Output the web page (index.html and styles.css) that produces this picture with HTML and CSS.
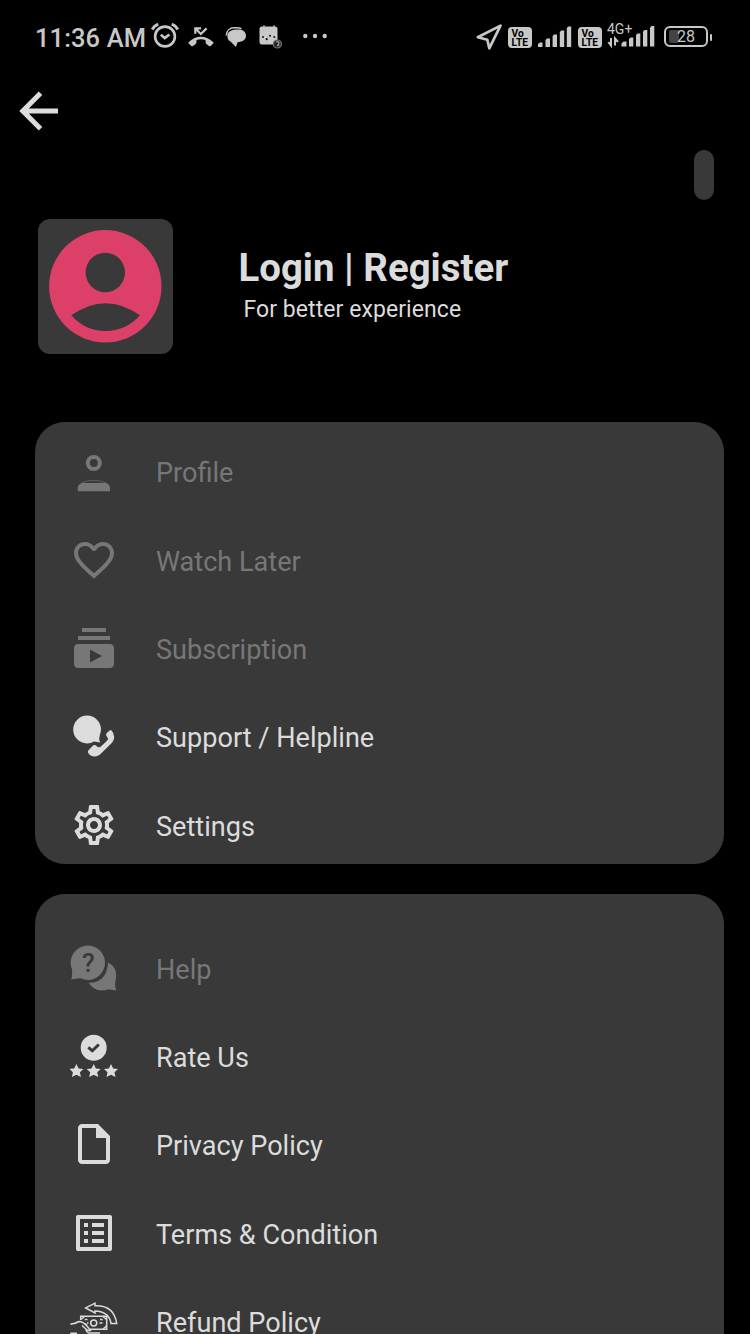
FILE: index.html
```html
<!DOCTYPE html>
<html lang="en">
<head>
<meta charset="utf-8">
<title>Account</title>
<link rel="stylesheet" href="styles.css">
</head>
<body>
<div class="screen">
  <header class="status">
    <div class="status-left">
      <span class="clock">11:36 AM</span>
      <svg class="ic-alarm" width="28" height="28" viewBox="0 0 28 28" fill="none" stroke="currentColor"><circle cx="14" cy="14.5" r="9.9" stroke-width="2.600"/><path d="M9.8 12.700l4 3.400 4.600-3.600" stroke-width="2.600"/><path d="M1.200 7.400Q3.200 3.800 7.200 2.200M26.800 7.400Q24.800 3.800 20.800 2.200" stroke-width="3"/></svg>
      <svg class="ic-missed" width="26" height="20" viewBox="0 0 26 20"><path d="M.6 15.200Q12.500 4.400 25.400 15.200Q25.800 16 25 16.800L22.600 19Q21.800 19.600 21 19L17.800 16.500L17.400 13Q13 11.600 8.600 13L8.200 16.500L5 19Q4.200 19.600 3.400 19L1 16.800Q.2 16 .6 15.200Z" fill="currentColor"/><path d="M7.300 6.800V1.300H13M7.500 1.600L12.800 7L18.600 1.400" fill="none" stroke="currentColor" stroke-width="2.200"/></svg>
      <svg class="ic-chat" width="22" height="20" viewBox="0 0 22 20"><path d="M12 2.400H14C18 2.400 21 5 21 8.700C21 12 18 15 12.500 15.200L11 20L5.500 14.600C3 13 2.400 11 2.400 8.700C2.400 5 6 2.400 12 2.400Z" fill="currentColor"/><path d="M1.200 8.500C1.500 3.500 5 .8 9 .8H11C14 .8 15.500 1 16.500 1.600" fill="none" stroke="currentColor" stroke-width="1.400"/></svg>
      <svg class="ic-cal" width="24" height="24" viewBox="0 0 24 24"><path d="M5 0V3M15 0V3" stroke="currentColor"/><rect x=".5" y="1.500" width="18" height="18" rx="2.500" fill="currentColor"/><g fill="#111"><circle cx="4" cy="12" r="1"/><circle cx="7.700" cy="14.200" r="1.100"/><circle cx="11" cy="10.800" r="1"/><circle cx="15.300" cy="12" r="1"/></g><circle cx="18.400" cy="19" r="4" fill="#222" stroke="#777" stroke-width="1.200"/><path d="M17 17Q20 16 20 18T18 20.500L20.500 21" fill="none" stroke="#aaa" stroke-width="1.200"/></svg>
      <svg class="ic-dots" width="24" height="6" viewBox="0 0 24 6" fill="currentColor"><circle cx="2.300" cy="3" r="2.200"/><circle cx="12" cy="3" r="2.200"/><circle cx="21.700" cy="3" r="2.200"/></svg>
    </div>
    <div class="status-right">
      <svg class="ic-nav" width="27" height="28" viewBox="0 0 27 28"><path d="M1.800 14.200L24.500 2.600L13.300 25.300L11.300 16.700Z" fill="none" stroke="currentColor" stroke-width="2.700" stroke-linejoin="round"/></svg>
      <div class="volte"><span>Vo</span><span>LTE</span></div>
      <svg class="ic-bars" width="34" height="22" viewBox="0 0 34 22" fill="currentColor"><path d="M0 21V18L2 16.500H4.500V21Z"/><path d="M7.500 21V14L9 12.500H12V21Z"/><path d="M14.600 21V10L16 8.500H19V21Z"/><path d="M21.800 21V6L23.300 4.500H26.200V21Z"/><path d="M28.800 21V2L30.300 .5H33.200V21Z"/></svg>
      <div class="volte volte-second"><span>Vo</span><span>LTE</span></div>
      <svg class="ic-4g" width="49" height="32" viewBox="0 -3 49 32" fill="currentColor"><text x="0" y="11" class="net">4G+</text><path d="M4 15V22M1.300 19L4 22.500V15.500M8 22.500V15.500L11 19" fill="none" stroke="currentColor" stroke-width="2"/><path d="M14.500 23.500V20.500L16.500 18.500H19.500V23.500Z"/><path d="M22 23.500V16L23.500 14.500H26.300V23.500Z"/><path d="M29 23.500V12L30.500 10.500H33.300V23.500Z"/><path d="M36 23.500V8.500L37.500 7H40.300V23.500Z"/><path d="M43 23.500V4.500L44.500 3H47.300V23.500Z"/></svg>
      <div class="battery"><span class="charge"></span><span class="level">28</span></div>
      <span class="nub"></span>
    </div>
  </header>

  <nav class="topbar">
    <svg width="40" height="40" viewBox="0 0 40 40" fill="none" stroke="currentColor" stroke-width="5"><path d="M39 20H4.500M21.500 2.300L3.800 20L21.500 37.700"/></svg>
  </nav>
  <div class="toggle-row"><span class="pill"></span></div>

  <section class="account">
    <div class="avatar">
      <svg width="134" height="134" viewBox="0 0 134 134"><circle cx="67.300" cy="67.300" r="56.200" fill="#dc4069"/><circle cx="67.300" cy="53.500" r="19.700" fill="#393939"/><path d="M33.300 96.300Q67.500 72 102 96.300Q88 112 67.500 112T33.300 96.300Z" fill="#393939"/></svg>
    </div>
    <div class="account-text">
      <h1>Login | Register</h1>
      <p>For better experience</p>
    </div>
  </section>

  <ul class="card card-main">
    <li class="row dim">
      <svg class="icon" viewBox="0 0 48 48"><circle cx="23.800" cy="16" r="6" fill="none" stroke="currentColor" stroke-width="4"/><path d="M7.800 44.300V40.500C8 38 10 36.300 12.500 36H35.500C37.500 36.300 39.800 38 40 40.500V44.300Z"/><path d="M11.500 36Q23.800 30.500 36.300 36" fill="none" stroke="currentColor" stroke-width=".6"/></svg>
      <span>Profile</span>
    </li>
    <li class="row dim">
      <svg class="icon" viewBox="0 0 24 24"><path d="M16.500 3c-1.740 0-3.410.81-4.500 2.090C10.910 3.810 9.240 3 7.500 3 4.420 3 2 5.420 2 8.500c0 3.780 3.400 6.860 8.550 11.540L12 21.350l1.450-1.320C18.600 15.360 22 12.280 22 8.500 22 5.420 19.580 3 16.500 3zm-4.400 15.550l-.1.100-.1-.1C7.140 14.240 4 11.390 4 8.500 4 6.500 5.500 5 7.500 5c1.540 0 3.040.99 3.570 2.360h1.870C13.460 5.990 14.960 5 16.500 5c2 0 3.500 1.500 3.500 3.500 0 2.890-3.140 5.740-7.900 10.050z"/></svg>
      <span>Watch Later</span>
    </li>
    <li class="row dim">
      <svg class="icon" viewBox="0 0 24 24"><path d="M20 8H4V6h16v2zm-2-6H6v2h12V2zm4 10v8c0 1.100-.9 2-2 2H4c-1.100 0-2-.9-2-2v-8c0-1.100.9-2 2-2h16c1.100 0 2 .9 2 2zm-6 4l-6-3.270v6.530L16 16z"/></svg>
      <span>Subscription</span>
    </li>
    <li class="row">
      <svg class="icon" viewBox="0 0 48 48"><path d="M29.800 23Q31 20 31 17.500A13.900 13.900 0 1 0 17 31.400Q21 31.400 24 29.500L30 30.500Q28.500 27 29.800 23Z"/><path d="M40 18.200L36.500 21.200Q35.800 22.500 36.300 23.800L38.200 26.800Q37.500 28.500 36.300 29.500L31.200 34.300Q30 35.500 28 35.300L25.700 33.300Q24.300 32.600 23.300 33.200L18.500 38.200Q17.500 39.500 18 40.500Q20 44.800 25.500 44.500Q28 44.200 30 42.500L42 30.700Q44.200 28 44.200 25Q43.800 20.500 41.500 18.500Q40.700 17.800 40 18.200Z"/></svg>
      <span>Support / Helpline</span>
    </li>
    <li class="row">
      <svg class="icon" viewBox="0 0 24 24"><path fill-rule="evenodd" d="M19.430 12.980c.04-.32.07-.64.07-.98 0-.34-.03-.66-.07-.98l2.110-1.650c.19-.15.24-.42.12-.64l-2-3.460c-.09-.16-.26-.25-.44-.25-.06 0-.12.010-.17.030l-2.490 1c-.52-.4-1.080-.73-1.690-.98l-.38-2.650C14.460 2.180 14.250 2 14 2h-4c-.25 0-.46.18-.49.42l-.38 2.650c-.61.25-1.170.59-1.690.98l-2.490-1c-.06-.02-.12-.03-.18-.03-.17 0-.34.09-.43.25l-2 3.460c-.13.22-.07.49.12.64l2.110 1.650c-.04.32-.07.65-.07.98 0 .33.030.66.070.98l-2.110 1.650c-.19.15-.24.42-.12.64l2 3.460c.09.16.26.25.44.25.06 0 .12-.01.17-.03l2.490-1c.52.4 1.080.73 1.690.98l.38 2.650c.03.24.24.42.49.42h4c.25 0 .46-.18.49-.42l.38-2.650c.61-.25 1.170-.59 1.690-.98l2.490 1c.06.02.12.03.18.03.17 0 .34-.09.43-.25l2-3.460c.12-.22.07-.49-.12-.64l-2.110-1.650zm-1.980-1.710c.04.31.05.52.05.73 0 .21-.02.43-.05.73l-.14 1.130.89.7 1.080.84-.7 1.210-1.270-.51-1.040-.42-.9.68c-.43.32-.84.56-1.250.73l-1.060.43-.16 1.130-.2 1.350h-1.400l-.19-1.350-.16-1.130-1.060-.43c-.43-.18-.83-.41-1.230-.71l-.91-.7-1.060.43-1.270.51-.7-1.210 1.080-.84.89-.7-.14-1.130c-.03-.31-.05-.54-.05-.74s.02-.43.05-.73l.14-1.130-.89-.7-1.080-.84.7-1.210 1.270.51 1.040.42.9-.68c.43-.32.84-.56 1.250-.73l1.060-.43.16-1.130.2-1.350h1.390l.19 1.350.16 1.130 1.060.43c.43.18.83.41 1.230.71l.91.7 1.060-.43 1.270-.51.7 1.210-1.070.85-.89.7.14 1.130zM12 8c-2.210 0-4 1.790-4 4s1.790 4 4 4 4-1.790 4-4-1.790-4-4-4zm0 6c-1.100 0-2-.9-2-2s.9-2 2-2 2 .9 2 2-.9 2-2 2z"/></svg>
      <span>Settings</span>
    </li>
  </ul>

  <ul class="card card-more">
    <li class="row dim">
      <svg class="icon" viewBox="0 0 48 48"><path d="M1.300 35.500Q2.500 32 2 25.500A17.200 17.200 0 1 1 10.500 34.300Q6 34.500 1.300 35.500Z"/><path d="M38 18.500Q46 22.500 46.200 31Q46.200 35.500 45 39.500Q45 43.500 46.200 46.500Q42.500 46 38.800 45.200Q25 49.500 18.700 38.800Q37 38.500 38 18.500Z"/><text x="18.300" y="28" class="question">?</text></svg>
      <span>Help</span>
    </li>
    <li class="row">
      <svg class="icon" viewBox="0 0 48 48"><circle cx="23.700" cy="15.800" r="13"/><path d="M18.300 15.300L22.300 18.800L28.800 12.500" fill="none" stroke="#393939" stroke-width="3"/><defs><path id="star" d="M0-7L2.150-2.500L7-2.100L3.500 1.300L4.500 6L0 3.800L-4.500 6L-3.500 1.300L-7-2.100L-2.150-2.500Z"/></defs><use href="#star" x="6.400" y="39"/><use href="#star" x="23.700" y="39"/><use href="#star" x="41" y="39"/></svg>
      <span>Rate Us</span>
    </li>
    <li class="row">
      <svg class="icon" viewBox="0 0 24 24"><path d="M14 2H6c-1.100 0-2 .9-2 2v16c0 1.100.9 2 2 2h12c1.100 0 2-.9 2-2V8l-6-6zM6 20V4h7v5h5v11H6z"/></svg>
      <span>Privacy Policy</span>
    </li>
    <li class="row">
      <svg class="icon" viewBox="0 0 24 24"><path d="M19 5v14H5V5h14m1.100-2H3.900c-.5 0-.9.4-.9.9v16.200c0 .4.400.9.900.9h16.200c.4 0 .9-.5.9-.9V3.900c0-.5-.5-.9-.9-.9zM11 7h6v2h-6V7zm0 4h6v2h-6v-2zm0 4h6v2h-6zM7 7h2v2H7zm0 4h2v2H7zm0 4h2v2H7z"/></svg>
      <span>Terms &amp; Condition</span>
    </li>
    <li class="row">
      <svg class="icon line" viewBox="0 0 48 48"><path d="M15.700 10.900L25 6.200V8.800Q44 8 46.700 26.600H41Q39.500 14.500 25 13.900V15.900Z"/><path d="M10.700 23V19.200H36.700V32.200H20"/><circle cx="23.700" cy="26" r="3"/><path d="M14.500 19.500L11 22.500M33 19.500L36.500 22.500M33 32L36.500 29M14.800 22.500H17.500M30 22.500H32.500M17 26H18.500M29.500 26H32.500M15 26.500L17 28"/><path d="M.3 27.200Q5 27 9 24.500Q13 24.500 17 29L20.500 33.500Q19 34.500 16.500 32.500L12 28.500M.3 36.200H7M16 32.500Q16.500 36 20 36H30"/></svg>
      <span>Refund Policy</span>
    </li>
  </ul>
</div>
</body>
</html>
```

FILE: styles.css
```css
* { box-sizing: border-box; }
body { margin: 0; background: #000; font-family: Roboto, "Liberation Sans", sans-serif; }
svg { display: block; flex: none; }

.screen {
  width: 750px;
  height: 1334px;
  overflow: hidden;
  background: #000;
  color: #dcdcdc;
}

/* Status bar */
.status {
  display: flex;
  justify-content: space-between;
  height: 74px;
  padding: 0 38px 0 35px;
  color: #c8c8c8;
}
.status-left, .status-right { display: flex; align-items: center; }
.clock { width: 115.500px; font-size: 25.500px; font-weight: 500; line-height: 30px; letter-spacing: 0.100px; white-space: nowrap; padding-top: 2px; }
.ic-alarm { margin-bottom: 2px; }
.ic-missed { margin-left: 9px; }
.ic-chat { margin-left: 11px; }
.ic-cal { margin-left: 12px; }
.ic-dots { margin-left: 20px; margin-bottom: 2px; }

.ic-nav { margin-right: 5px; }
.volte {
  display: flex;
  flex-direction: column;
  justify-content: center;
  width: 24px;
  height: 21px;
  padding: 1px 0 0 3.500px;
  border-radius: 4px;
  background: #c8c8c8;
  color: #000;
  font-size: 10.200px;
  font-weight: 700;
  line-height: 9px;
}
.ic-bars { margin-left: 6px; }
.volte-second { margin-left: 6px; }
.ic-4g { margin: 0 0 2px 5px; }
.net { font-size: 14px; }
.battery {
  display: flex;
  align-items: center;
  justify-content: center;
  position: relative;
  width: 44px;
  height: 21px;
  margin-left: 8px;
  margin-bottom: 1px;
  border: 2px solid #c8c8c8;
  border-radius: 6px;
}
.charge { position: absolute; left: 3px; top: 2px; width: 10px; height: 13px; border-radius: 2px; background: #444; }
.level { position: relative; font-size: 16px; line-height: 17px; }
.nub { width: 2px; height: 7px; margin-left: 2px; border-radius: 1px; background: #c8c8c8; }

/* Header */
.topbar { height: 75.500px; padding: 17px 19px; }
.toggle-row { display: flex; justify-content: flex-end; height: 69.500px; padding-right: 36px; }
.pill { width: 20px; height: 50.500px; border-radius: 10px; background: #393939; }

.account { display: flex; height: 203px; padding-left: 38px; }
.avatar { width: 134.500px; height: 134.500px; border-radius: 12px; background: #393939; }
.account-text { margin-left: 66px; padding-top: 26px; }
.account h1 { margin: 0; font-size: 38.400px; font-weight: 700; line-height: 46px; white-space: nowrap; }
.account p { margin: 5px 0 0 5px; font-size: 23px; line-height: 28px; letter-spacing: 0.070px; white-space: nowrap; }

/* Menu cards */
.card {
  display: flex;
  flex-direction: column;
  gap: 40.400px;
  width: 688.500px;
  margin: 0 0 0 35px;
  padding: 25.300px 35px 0 34.600px;
  list-style: none;
  border-radius: 30px;
  background: #393939;
}
.card-main { height: 442px; margin-bottom: 29.500px; }
.card-more { height: 530px; padding-top: 50.200px; }
.row { display: flex; align-items: center; height: 48px; font-size: 27.100px; }
.row span { margin-left: 38.400px; padding-top: 4px; line-height: 34px; white-space: nowrap; }
.dim { color: #777; }
.icon { width: 48px; height: 48px; fill: currentColor; }
.line { fill: none; stroke: currentColor; stroke-width: 1.500; }
.question { fill: #393939; font-size: 26px; font-weight: 500; text-anchor: middle; }
```
